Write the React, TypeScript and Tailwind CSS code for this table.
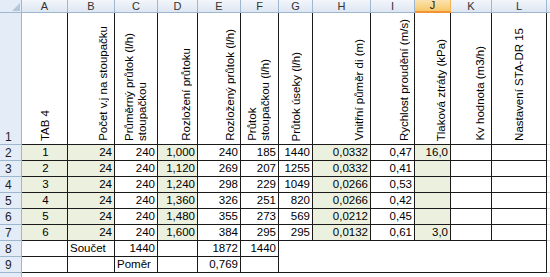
import React from 'react';

type Col = {
  key: string;
  w: string;
  head: React.ReactNode;
  hAlign: string;
  fill?: boolean;
};

const cols: Col[] = [
  { key: 'A', w: 'w-[46px]', head: 'TAB 4', hAlign: 'justify-center pl-[2px]', fill: true },
  { key: 'B', w: 'w-[47px]', head: 'Počet v.j na stoupačku', hAlign: 'justify-end pr-[4px]', fill: true },
  { key: 'C', w: 'w-[43px]', head: <>Průměrný průtok (l/h)<br />stoupačkou</>, hAlign: 'justify-center' },
  { key: 'D', w: 'w-[40px]', head: 'Rozložení průtoku', hAlign: 'justify-end pr-[4px]', fill: true },
  { key: 'E', w: 'w-[43px]', head: 'Rozložený průtok (l/h)', hAlign: 'justify-end pr-[3px]' },
  { key: 'F', w: 'w-[38px]', head: <>Průtok<br />stoupačkou (l/h)</>, hAlign: 'justify-center pr-[2px]' },
  { key: 'G', w: 'w-[34px]', head: 'Průtok úseky (l/h)', hAlign: 'justify-center pl-[2px]' },
  { key: 'H', w: 'w-[58px]', head: 'Vnitřní půměr di (m)', hAlign: 'justify-end pr-[4px]', fill: true },
  { key: 'I', w: 'w-[44px]', head: 'Rychlost proudění (m/s)', hAlign: 'justify-end pr-[3px]' },
  { key: 'J', w: 'w-[36px]', head: 'Tlaková ztráty (kPa)', hAlign: 'justify-end pr-[2px]' },
  { key: 'K', w: 'w-[41px]', head: 'Kv hodnota (m3/h)', hAlign: 'justify-end pr-[4px]' },
  { key: 'L', w: 'w-[55px]', head: 'Nastavení STA-DR 15', hAlign: 'justify-center' },
];

const rows: string[][] = [
  ['1', '24', '240', '1,000', '240', '185', '1440', '0,0332', '0,47', '16,0', '', ''],
  ['2', '24', '240', '1,120', '269', '207', '1255', '0,0332', '0,41', '', '', ''],
  ['3', '24', '240', '1,240', '298', '229', '1049', '0,0266', '0,53', '', '', ''],
  ['4', '24', '240', '1,360', '326', '251', '820', '0,0266', '0,42', '', '', ''],
  ['5', '24', '240', '1,480', '355', '273', '569', '0,0212', '0,45', '', '', ''],
  ['6', '24', '240', '1,600', '384', '295', '295', '0,0132', '0,61', '3,0', '', ''],
];

const font = "font-['Liberation_Sans',Arial,sans-serif]";

const RowHead = ({ n, tall }: { n: string; tall?: boolean }) => (
  <div
    className={`w-[22px] shrink-0 bg-[#e4ecf7] border-r border-b border-[#9eb6ce] flex ${
      tall ? 'items-end pb-[1px]' : 'items-center'
    } pl-[5px] text-[12px] text-[#1e1e1e] leading-none`}
  >
    {n}
  </div>
);

export default function App() {
  return (
    <div className={`w-[550px] h-[277px] overflow-hidden bg-white ${font} text-black`}>
      {/* column headers */}
      <div className="flex h-[13px]">
        <div className="w-[22px] shrink-0 bg-[#e4ecf7] border-r border-b border-[#9eb6ce] flex items-end justify-end p-[1px]">
          <svg width="8" height="8" viewBox="0 0 8 8">
            <polygon points="8,0 8,8 0,8" fill="#b4c6dc" />
          </svg>
        </div>
        {cols.map((c) => (
          <div
            key={c.key}
            className={`${c.w} shrink-0 border-r flex items-center justify-center text-[11px] leading-none ${
              c.key === 'J'
                ? 'bg-gradient-to-b from-[#fbe3b0] to-[#f6c867] border-[#f0b456] border-b-2 border-b-[#f29436] text-[#222]'
                : 'bg-gradient-to-b from-[#f3f6fb] to-[#dde6f2] border-[#9eb6ce] border-b text-[#333]'
            }`}
          >
            {c.key}
          </div>
        ))}
        <div className="flex-1 bg-gradient-to-b from-[#f3f6fb] to-[#dde6f2] border-b border-[#9eb6ce]" />
      </div>

      {/* row 1 with rotated headings */}
      <div className="flex h-[132px]">
        <RowHead n="1" tall />
        {cols.map((c) => (
          <div
            key={c.key}
            className={`${c.w} shrink-0 border-r border-b border-[#1a1a1a] flex items-end pb-[3px] ${c.hAlign} text-[11.5px]`}
          >
            <span className="[writing-mode:vertical-rl] rotate-180 leading-[13px] whitespace-nowrap">{c.head}</span>
          </div>
        ))}
        <div className="flex-1 border-b border-[#d0d7e5]" />
      </div>

      {/* data rows */}
      {rows.map((r, ri) => (
        <div key={ri} className="flex h-[16px]">
          <RowHead n={String(ri + 2)} />
          {cols.map((c, ci) => {
            const green = c.fill || (c.key === 'J');
            return (
              <div
                key={c.key}
                className={`${c.w} shrink-0 border-r border-b border-[#1a1a1a] flex items-center ${
                  ci === 0 ? 'justify-center pl-[2px]' : 'justify-end pr-[2px]'
                } ${green ? 'bg-[#ebf1de]' : 'bg-white'} text-[11.5px] leading-none pt-[1px]`}
              >
                {r[ci]}
              </div>
            );
          })}
          <div className="flex-1 border-b border-[#d0d7e5]" />
        </div>
      ))}

      {/* rows 8 and 9 */}
      <div className="flex h-[32px]">
        <div className="flex flex-col">
          <div className="flex h-[16px]">
            <RowHead n="8" />
            <div className="w-[46px] shrink-0 border-r border-b border-[#1a1a1a]" />
            <div className="w-[47px] shrink-0 border-r border-b border-[#1a1a1a] flex items-center pl-[2px] text-[11.5px] leading-none pt-[1px]">Součet</div>
            <div className="w-[43px] shrink-0 border-r border-b border-[#1a1a1a] flex items-center justify-end pr-[2px] text-[11.5px] leading-none pt-[1px]">1440</div>
            <div className="w-[40px] shrink-0 border-r border-b border-[#1a1a1a]" />
            <div className="w-[43px] shrink-0 border-r border-b border-[#1a1a1a] flex items-center justify-end pr-[2px] text-[11.5px] leading-none pt-[1px]">1872</div>
            <div className="w-[38px] shrink-0 border-r border-b border-[#1a1a1a] flex items-center justify-end pr-[2px] text-[11.5px] leading-none pt-[1px]">1440</div>
          </div>
          <div className="flex h-[16px]">
            <RowHead n="9" />
            <div className="w-[46px] shrink-0 border-r border-b border-[#1a1a1a]" />
            <div className="w-[47px] shrink-0 border-r border-b border-[#1a1a1a]" />
            <div className="w-[43px] shrink-0 border-r border-b border-[#1a1a1a] flex items-center pl-[2px] text-[11.5px] leading-none pt-[1px]">Poměr</div>
            <div className="w-[40px] shrink-0 border-r border-b border-[#1a1a1a]" />
            <div className="w-[43px] shrink-0 border-r border-b border-[#1a1a1a] flex items-center justify-end pr-[2px] text-[11.5px] leading-none pt-[1px]">0,769</div>
            <div className="w-[38px] shrink-0 border-r border-b border-[#1a1a1a]" />
          </div>
        </div>
        {/* merged G8:L9 */}
        <div className="w-[268px] shrink-0 border-r border-b border-[#1a1a1a]" />
        <div className="flex-1 border-b border-[#d0d7e5]" />
      </div>

      {/* partial row 10 */}
      <div className="flex h-[4px]">
        <div className="w-[22px] shrink-0 bg-[#e4ecf7] border-r border-[#9eb6ce]" />
        <div className="flex-1" />
      </div>
    </div>
  );
}
